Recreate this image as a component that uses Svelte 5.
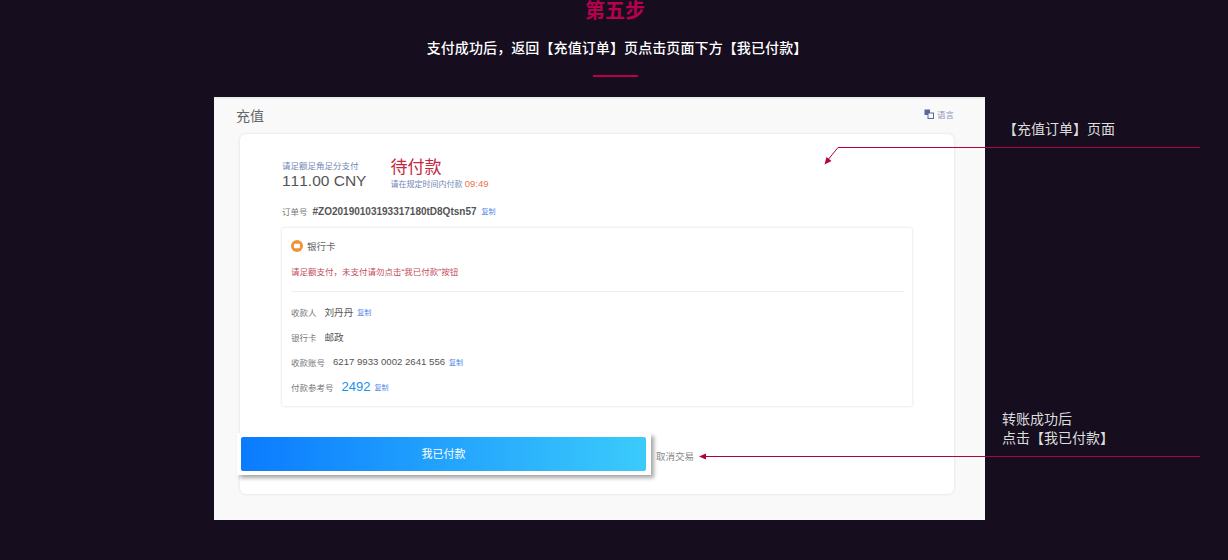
<script lang="ts">
  const rows = [
    { label: '收款人', value: '刘丹丹', copy: true },
    { label: '银行卡', value: '邮政', copy: false },
    { label: '收款账号', value: '6217 9933 0002 2641 556', copy: true },
    { label: '付款参考号', value: '2492', copy: true, accent: true },
  ];
</script>

<div class="page">
  <header class="head">
    <h1>第五步</h1>
    <p>支付成功后，返回【充值订单】页点击页面下方【我已付款】</p>
    <span class="rule"></span>
  </header>

  <section class="shot">
    <div class="shot-top">
      <span class="shot-title">充值</span>
      <span class="lang">
        <svg width="10" height="10" viewBox="0 0 10 10">
          <rect x="0.5" y="0.5" width="5.5" height="5.5" fill="#5a66a0" />
          <rect x="4" y="4" width="5.5" height="5.5" fill="#f9f9fa" stroke="#5a66a0" />
        </svg>
        语言
      </span>
    </div>

    <div class="card">
      <div class="summary">
        <div class="amount">
          <small>请足额足角足分支付</small>
          <strong>111.00 CNY</strong>
        </div>
        <div class="status">
          <b>待付款</b>
          <small>请在规定时间内付款 <em>09:49</em></small>
        </div>
      </div>

      <div class="order">
        <span class="label">订单号</span>
        <span class="order-no">#ZO20190103193317180tD8Qtsn57</span>
        <span class="copy">复制</span>
      </div>

      <div class="bank">
        <div class="bank-head">
          <svg width="12" height="12" viewBox="0 0 12 12">
            <circle cx="6" cy="6" r="6" fill="#f2923a" />
            <rect x="3" y="3.8" width="6" height="4.4" rx="0.8" fill="#fff" />
          </svg>
          银行卡
        </div>
        <div class="warn">请足额支付，未支付请勿点击“我已付款”按钮</div>
        <div class="sep"></div>
        {#each rows as row (row.label)}
          <div class="row">
            <span class="label">{row.label}</span>
            <span class="value" class:accent={row.accent}>{row.value}</span>
            {#if row.copy}<span class="copy">复制</span>{/if}
          </div>
        {/each}
      </div>

      <div class="actions">
        <div class="btn-wrap">
          <button type="button">我已付款</button>
        </div>
        <span class="cancel">取消交易</span>
      </div>
    </div>
  </section>

  <!-- callouts drawn on top of the screenshot -->
  <div class="note note-a">【充值订单】页面</div>
  <div class="note note-b">转账成功后<br />点击【我已付款】</div>
  <svg class="lines" width="1228" height="560" viewBox="0 0 1228 560">
    <path d="M1200 147.5H838L827 161" fill="none" stroke="#b5003f" />
    <path d="M824.5 164.5l2-7.5 5 4z" fill="#b5003f" />
    <path d="M1200 456.5H704" fill="none" stroke="#b5003f" />
    <path d="M699 456.5l7-3v6z" fill="#b5003f" />
  </svg>
</div>

<style>
  :global(body) {
    background: #160d1f;
  }
  .page {
    position: relative;
    width: 1228px;
    height: 560px;
    overflow: hidden;
    background: #160d1f;
    font-family: "Liberation Sans", "Noto Sans CJK SC", sans-serif;
    font-kerning: none;
  }
  .head {
    display: flex;
    flex-direction: column;
    align-items: center;
    height: 97px;
    padding-left: 2px;
    box-sizing: border-box;
  }
  .head h1 {
    margin: 0;
    height: 22px;
    font-size: 20px;
    line-height: 22px;
    color: #b8004f;
  }
  .head p {
    margin: 15px 0 0 4px;
    font-size: 14px;
    line-height: 22px;
    font-weight: 500;
    letter-spacing: 0.1px;
    color: #fff;
  }
  .rule {
    width: 45px;
    height: 2px;
    margin-top: 16px;
    background: #b8004f;
  }
  .shot {
    width: 771px;
    height: 423px;
    margin-left: 214px;
    box-sizing: border-box;
    border-top: 2px solid #ececec;
    background: #f9f9fa;
    padding: 0 31px 0 26px;
  }
  .shot-top {
    display: flex;
    justify-content: space-between;
    height: 35px;
    margin-left: -4px;
  }
  .shot-title {
    font-size: 14px;
    line-height: 35px;
    color: #666;
  }
  .lang {
    display: flex;
    align-items: center;
    gap: 3px;
    height: 30px;
    font-size: 8.5px;
    color: #8c93b8;
  }
  .card {
    height: 360px;
    box-sizing: border-box;
    padding: 0 42px;
    border-radius: 6px;
    background: #fff;
    box-shadow: 0 0 3px rgba(0, 0, 0, 0.12);
  }
  .summary {
    display: flex;
    gap: 24px;
    padding-top: 24px;
    height: 57px;
    box-sizing: border-box;
  }
  .amount small,
  .status small {
    display: block;
    font-size: 8.5px;
    line-height: 11px;
    color: #6f86b5;
  }
  .amount {
    padding-top: 3px;
  }
  .amount strong {
    display: block;
    font-size: 15.5px;
    font-weight: 400;
    line-height: 18px;
    color: #555;
  }
  .status b {
    display: block;
    font-size: 17px;
    font-weight: 400;
    line-height: 20px;
    color: #c4283f;
  }
  .status small {
    font-size: 8px;
    line-height: 12px;
  }
  .status em {
    font-style: normal;
    font-size: 9.5px;
    color: #f0704a;
  }
  .order {
    display: flex;
    align-items: center;
    gap: 5px;
    height: 20px;
    margin-top: 10px;
  }
  .label {
    font-size: 8.5px;
    color: #777;
  }
  .order-no {
    font-size: 10px;
    font-weight: 700;
    color: #555;
  }
  .copy {
    font-size: 7px;
    color: #4f86e8;
  }
  .bank {
    height: 178px;
    margin-top: 7px;
    box-sizing: border-box;
    padding: 0 8px 0 9px;
    background: #fff;
    box-shadow: 0 0 3px rgba(0, 0, 0, 0.16);
    border-radius: 2px;
  }
  .bank-head {
    display: flex;
    align-items: center;
    gap: 4px;
    height: 36px;
    font-size: 9.5px;
    color: #666;
  }
  .warn {
    margin-top: 1px;
    font-size: 8.5px;
    line-height: 14px;
    color: #c4485a;
  }
  .sep {
    height: 1px;
    margin-top: 12px;
    background: #eee;
  }
  .row {
    display: flex;
    align-items: center;
    gap: 8px;
    height: 25px;
    font-size: 9.6px;
    color: #555;
  }
  .row .copy {
    margin-left: -4px;
  }
  .sep + .row {
    margin-top: 7px;
  }
  .value.accent {
    font-size: 13px;
    color: #1a90f0;
  }
  .actions {
    display: flex;
    align-items: center;
    gap: 5px;
    margin-top: 27px;
    margin-left: -45px;
  }
  .btn-wrap {
    width: 414px;
    height: 42px;
    box-sizing: border-box;
    padding: 4px 5px 4px 4px;
    background: #fff;
    box-shadow: 3px 3px 4px rgba(0, 0, 0, 0.35);
  }
  .btn-wrap button {
    display: block;
    width: 100%;
    height: 34px;
    border: 0;
    border-radius: 2px;
    padding: 0 0 2px;
    font: inherit;
    font-size: 11px;
    color: #fff;
    background: linear-gradient(90deg, #0a7bff, #3bcbfb);
  }
  .cancel {
    font-size: 9.5px;
    color: #888;
    margin-top: 4px;
  }
  .note {
    position: absolute;
    font-size: 14px;
    line-height: 19px;
    color: #ddd;
  }
  .note-a {
    left: 1003px;
    top: 120px;
  }
  .note-b {
    left: 1002px;
    top: 410px;
  }
  .lines {
    position: absolute;
    inset: 0;
    pointer-events: none;
  }
</style>
